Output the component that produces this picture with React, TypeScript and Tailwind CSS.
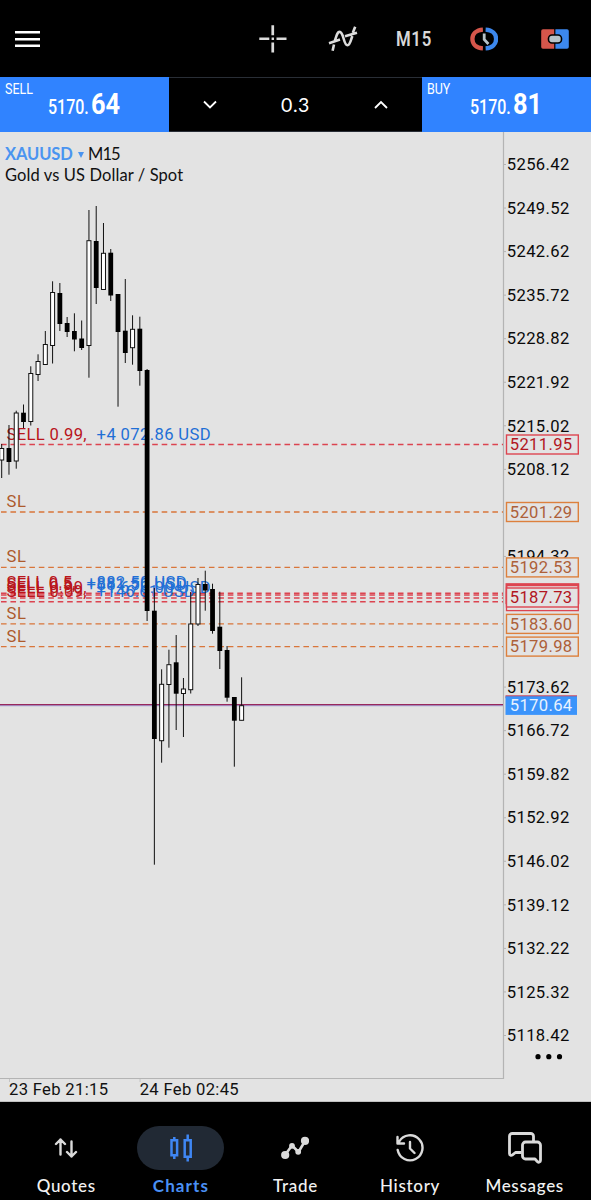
import type { ReactNode } from "react";

// [open/close top, open/close bottom, high, low, bullish]
type Candle = [number, number, number, number, boolean];

const CANDLES: Candle[] = [
  [448.5, 460, 444, 478, true],
  [448, 462, 425, 474.7, false],
  [413, 461, 410.7, 468.7, true],
  [412.7, 422, 404.5, 428, false],
  [373.5, 421.5, 366.3, 425.5, true],
  [361.5, 374.5, 354.3, 381, true],
  [344.5, 364.5, 331, 364.5, true],
  [292.5, 345.5, 281.3, 363.5, true],
  [293, 324, 283, 331, false],
  [323, 332, 317, 337, false],
  [331, 339.5, 313.3, 351.3, false],
  [338.5, 348, 320.5, 350, false],
  [240.7, 345.5, 210, 377.7, true],
  [241, 288, 206, 304, false],
  [253.3, 289.5, 223, 289.5, true],
  [252.7, 295.5, 249, 301, false],
  [294, 332, 294, 406.7, false],
  [330.7, 353, 279, 363, false],
  [329.3, 347.7, 315.3, 364.7, true],
  [328.7, 371, 316.7, 385.7, false],
  [370, 611, 369, 621, false],
  [610.7, 739, 588, 864.7, false],
  [684.3, 740.7, 669.3, 762.7, true],
  [664.7, 684.5, 649.7, 747.7, true],
  [662.3, 693.7, 635, 730, false],
  [689, 693.5, 678, 737, true],
  [624, 689.7, 592, 693.5, true],
  [584.5, 624, 578, 626, true],
  [584, 590.5, 570.7, 610.7, false],
  [589, 631, 583.7, 633.7, false],
  [626.7, 651, 591.7, 669, false],
  [650, 697.7, 646, 701.7, false],
  [697, 720.7, 697, 766.7, false],
  [705.7, 720.3, 677.3, 720.3, true],
];

const AXIS_LABELS = [
  "5256.42", "5249.52", "5242.62", "5235.72", "5228.82", "5221.92", "5215.02",
  "5208.12", "", "5194.32", "", "", "5173.62", "5166.72", "5159.82", "5152.92",
  "5146.02", "5139.12", "5132.22", "5125.32", "5118.42",
];

const STOPS = [
  { y: 512, price: "5201.29" },
  { y: 567.4, price: "5192.53" },
  { y: 623.9, price: "5183.60" },
  { y: 646.6, price: "5179.98" },
];

const POSITIONS = [
  { y: 444.5, volume: "0.99", volumeWidth: 80, profit: "+4 072.86 USD", x: 97, width: 114 },
  { y: 593.3, volume: "0.5", volumeWidth: 69, profit: "+882.50 USD", x: 87, width: 100 },
  { y: 595, volume: "0.5", volumeWidth: 69, profit: "+881.50 USD", x: 87, width: 100 },
  { y: 598, volume: "0.99", volumeWidth: 80, profit: "+1 670.00 USD", x: 97, width: 114 },
  { y: 601.7, volume: "0.09", volumeWidth: 80, profit: "+146.61 USD", x: 97, width: 98 },
];

function PriceTag({ y, price, stroke, fill }: { y: number; price: string; stroke: string; fill: string }) {
  return (
    <g>
      <rect x="506.5" y={y - 9.5} width="71.8" height="19" fill="#e3e3e3" stroke={stroke} strokeWidth="1.4" />
      <text x="509.7" y={y + 5.6} textLength="62.5" fill={fill}>{price}</text>
    </g>
  );
}

function Chart() {
  return (
    <svg viewBox="0 132 591 970" className="block h-[970px] w-[591px] font-['Roboto',sans-serif] text-[16.6px]">
      <path d="M503.5 132V1078.5H0" fill="none" stroke="#b4b4b4" strokeWidth="1.2" />
      <path d="M0 1101.5H591" stroke="#c0c0c0" />
      <path d="M9.5 1079v3M140 1079v3" stroke="#c4c4c4" />

      {AXIS_LABELS.map((label, i) => {
        const y = 164.5 + i * 43.55;
        return label && (
          <g key={label}>
            <path d={`M504 ${y}h2`} stroke="#b4b4b4" />
            <text x="506.8" y={y + 5.7} textLength="62.5" fill="#0a0a0a">{label}</text>
          </g>
        );
      })}

      {/* position levels */}
      {POSITIONS.map((p) => (
        <g key={p.profit}>
          <path d={`M1 ${p.y}H503`} stroke="#dc4450" strokeWidth="1.4" strokeDasharray="5.6 3.85" />
          <text x="6.6" y={p.y - 4.9} textLength={p.volumeWidth} fill="#b9151b">
            SELL {p.volume},
          </text>
          <text x={p.x - 0.4} y={p.y - 4.9} textLength={p.width} fill="#1f6fd6">{p.profit}</text>
        </g>
      ))}
      {STOPS.map((s) => (
        <g key={s.price}>
          <path d={`M1 ${s.y}H503`} stroke="#d9763a" strokeWidth="1.4" strokeDasharray="5.6 3.85" />
          <text x="6.6" y={s.y - 5} textLength="19.4" fill="#ad5a2c">SL</text>
        </g>
      ))}
      <path d="M0 705.7H503" stroke="#a9a4d8" strokeWidth="1.2" />
      <path d="M0 704.6H503" stroke="#98285c" strokeWidth="1.3" />

      {CANDLES.map(([top, bottom, high, low, bullish], i) => {
        const x = 1.7 + i * 7.27;
        return (
          <g key={i}>
            <path d={`M${x} ${high}V${low}`} stroke="#111" strokeWidth="1" />
            {bullish ? (
              <rect x={x - 2} y={top} width="4" height={bottom - top} fill="#fff" stroke="#111" strokeWidth="1" />
            ) : (
              <rect x={x - 2.4} y={top} width="4.8" height={bottom - top} fill="#000" />
            )}
          </g>
        );
      })}

      {/* price tags */}
      {STOPS.map((s) => (
        <PriceTag key={s.price} y={s.y} price={s.price} stroke="#dd803d" fill="#ad6039" />
      ))}
      <PriceTag y={444.5} price="5211.95" stroke="#dd4550" fill="#b2161f" />
      <rect x="506.5" y="592" width="71.8" height="18.6" fill="#e3e3e3" stroke="#dd4550" strokeWidth="1.3" />
      <rect x="506.5" y="584.2" width="71.8" height="19" fill="#e3e3e3" stroke="#dd4550" strokeWidth="2" />
      <PriceTag y={597.5} price="5187.73" stroke="#dd4550" fill="#b2161f" />
      <path d="M506 585H578.5" stroke="#dd4550" strokeWidth="2.4" />
      <rect x="505.5" y="695.3" width="71.5" height="3" fill="#c2405c" />
      <rect x="505.5" y="696.3" width="71.5" height="18.6" fill="#3b94fb" />
      <text x="509.7" y="711.4" textLength="62.5" fill="#e8f2ff">5170.64</text>

      <circle cx="538" cy="1056.7" r="2.6" />
      <circle cx="548.8" cy="1056.7" r="2.6" />
      <circle cx="559.5" cy="1056.7" r="2.6" />
      <text x="9" y="1095.2" textLength="99" fill="#111">23 Feb 21:15</text>
      <text x="139.7" y="1095.2" textLength="99" fill="#111">24 Feb 02:45</text>
    </svg>
  );
}

function Toolbar() {
  return (
    <header className="flex h-[77px] items-center">
      <svg viewBox="0 0 26 18" className="ml-[15px] h-[18px] w-[26px]">
        <path d="M0 2.3h25M0 9.2h25M0 15.8h25" stroke="#fff" strokeWidth="2.6" />
      </svg>
      <svg viewBox="0 0 28 28" className="ml-[218px] h-7 w-7" fill="#dcdcdc">
        <path d="M12.4.3h2.7v10h-2.7zM12.4 17.5h2.7v10h-2.7zM.3 12.5h10v2.6h-10zM17.5 12.5h10v2.6h-10zM12.6 12.6h2.4V15h-2.4z" />
      </svg>
      <svg viewBox="0 0 30 26" className="ml-[41px] h-[26px] w-[30px]" fill="none" stroke="#dcdcdc" strokeWidth="2.6">
        <path d="M1 17.2 12 13.6M17 10.2 29 6.8M4.6 24.8 6 18.5M6.7 15C8.8 9.3 9.2 5.9 11.5 5.9c4.5 0 3.8 13.4 8 13.4 2.5 0 3.3-5 4.8-9.3M24.8 6.8 27.2.8" />
      </svg>
      <span className="ml-[38px] inline-block w-[36px] origin-left scale-x-[.84] font-['Roboto',sans-serif] text-[20px] font-semibold tracking-[0.8px] text-[#d8d8d8]">
        M15
      </span>
      <svg viewBox="0 0 28 24" className="ml-[38px] h-6 w-7" fill="none">
        <path d="M12.9 2.6C6 3 2.4 7.2 2.4 12s3.6 9 10.5 9.4" stroke="#d6564b" strokeWidth="4.3" />
        <path d="M15.6 2.6C22.5 3 26.1 7.2 26.1 12s-3.6 9-10.5 9.4" stroke="#3c88ee" strokeWidth="4.3" />
        <path d="M14.2 6.5v6l4.2 4.5" stroke="#b7c3c9" strokeWidth="2.8" />
      </svg>
      <svg viewBox="0 0 28 20" className="ml-[43px] h-5 w-7">
        <path d="M2 .2h11.2v19.5H2a1.8 1.8 0 0 1-1.8-1.8V2A1.8 1.8 0 0 1 2 .2z" fill="#d6564b" />
        <path d="M14.4.2H26A1.8 1.8 0 0 1 27.8 2v15.9a1.8 1.8 0 0 1-1.8 1.8H14.4z" fill="#3c88ee" />
        <rect x="7.5" y="6" width="13" height="8" rx="3.5" fill="#b7c3c9" stroke="#000" strokeWidth="1.6" />
      </svg>
    </header>
  );
}

function Quote({ side, whole, cents }: { side: string; whole: string; cents: string }) {
  return (
    <button className="relative w-[169px] bg-[#3083ff] text-left font-['Roboto',sans-serif] text-white">
      <span className="absolute left-[5px] top-[5px] origin-left scale-x-[.86] text-[14.5px] leading-4">{side}</span>
      <span className="ml-12 mt-[2px] flex items-baseline">
        <span className="w-[42.5px]">
          <span className="inline-block origin-left scale-x-[.82] text-[19.5px] font-medium">{whole}.</span>
        </span>
        <span className="inline-block origin-left scale-x-[.86] text-[29.5px] font-bold leading-8">{cents}</span>
      </span>
    </button>
  );
}

function TradeBar() {
  return (
    <div className="flex h-[55px]">
      <Quote side="SELL" whole="5170" cents="64" />
      <div className="flex w-[253px] items-center border-y border-[#292e36] text-white">
        <svg viewBox="0 0 14 10" className="ml-[34px] h-[10px] w-[14px]" fill="none" stroke="#fff" strokeWidth="1.8">
          <path d="m1 1.5 6 6 6-6" />
        </svg>
        <span className="ml-[64px] w-[31px] font-['Lato',sans-serif] text-[19.5px] tracking-[0.6px]">0.3</span>
        <svg viewBox="0 0 14 10" className="ml-[62px] h-[10px] w-[14px]" fill="none" stroke="#fff" strokeWidth="1.8">
          <path d="m1 8 6-6 6 6" />
        </svg>
      </div>
      <Quote side="BUY" whole="5170" cents="81" />
    </div>
  );
}

function NavItem({ label, active, children }: { label: string; active?: boolean; children: ReactNode }) {
  return (
    <button className={`flex w-[114.6px] flex-col items-center ${active ? "text-[#4a90f5]" : "text-[#f2f2f2]"}`}>
      <span className={`flex h-11 w-[87px] items-center justify-center rounded-full ${active ? "bg-[#212934]" : ""}`}>
        {children}
      </span>
      <span className={`mt-1 font-['Lato',sans-serif] text-[17px] leading-6 ${active ? "font-bold tracking-[1.1px]" : "font-medium tracking-[0.7px]"}`}>
        {label}
      </span>
    </button>
  );
}

export default function App() {
  return (
    <div className="flex h-[1200px] w-[591px] flex-col overflow-hidden bg-black">
      <Toolbar />
      <TradeBar />
      <main className="relative h-[970px] bg-[#e3e3e3]">
        <Chart />
        <div className="absolute left-[5px] top-3 whitespace-nowrap font-['Lato',sans-serif] text-[16.5px] leading-[21px] text-[#111]">
          <div className="flex items-center">
            <span className="w-[73px] font-bold tracking-[-0.1px] text-[#4a94f0]">XAUUSD</span>
            <svg viewBox="0 0 6 6" className="h-[6px] w-[6px]">
              <path d="M0 0h6L3 6z" fill="#4a94f0" />
            </svg>
            <span className="ml-[4px] tracking-[-0.9px]">M15</span>
          </div>
          <div className="tracking-[0.1px]">Gold vs US Dollar / Spot</div>
        </div>
      </main>
      <nav className="flex h-[98px] pl-[9px] pt-6">
        <NavItem label="Quotes">
          <svg viewBox="0 0 24 20" className="h-5 w-6" fill="none" stroke="#dadada" strokeWidth="2.4" strokeLinecap="round" strokeLinejoin="round">
            <path d="M6.5 16.5V1.5M2 6l4.5-4.5L11 6M17.5 3.5v15M13 14l4.5 4.5L22 14" />
          </svg>
        </NavItem>
        <NavItem label="Charts" active>
          <svg viewBox="0 0 24 28" className="h-7 w-6" fill="none" stroke="#3f86f3" strokeWidth="2.5">
            <path d="M2.5 6.2h5.6v15H2.5zM15.7 6.2h6v16.5h-6zM5.3 3v3M5.3 21v4M18.7.5V6M18.7 23v4.5" />
          </svg>
        </NavItem>
        <NavItem label="Trade">
          <svg viewBox="0 0 28 24" className="h-6 w-7" fill="none" stroke="#dadada" strokeWidth="2.6" strokeLinejoin="round">
            <path d="m4 19 7-9.5 6.5 6.5L24 5" />
            <circle cx="4.2" cy="19" r="2.8" fill="#dadada" />
            <circle cx="11" cy="9.8" r="1.6" fill="#dadada" />
            <circle cx="17.2" cy="15.8" r="1.6" fill="#dadada" />
            <circle cx="24" cy="4.8" r="2.8" fill="#dadada" />
          </svg>
        </NavItem>
        <NavItem label="History">
          <svg viewBox="0 0 28 28" className="h-7 w-7" fill="none" stroke="#dadada" strokeWidth="2.4" strokeLinecap="round" strokeLinejoin="round">
            <path d="M1.7 16A12.5 12.5 0 1 0 3.2 7.5M1.5 3v6.5H8M14 8v6.5l4.5 4.5" />
          </svg>
        </NavItem>
        <NavItem label="Messages">
          <svg viewBox="0 0 34 32" className="h-8 w-[34px]" fill="none" stroke="#dadada" strokeWidth="2.8" strokeLinejoin="round">
            <path d="M25.5 9.5V4.3A2.8 2.8 0 0 0 22.7 1.5H4.3A2.8 2.8 0 0 0 1.5 4.3V21.5c0 1.8 1.7 2.3 3 1.3l3-2.3h6" />
            <path d="M17.5 10h11.8a3.2 3.2 0 0 1 3.2 3.2v15c0 2-1.8 2.5-3 1.5L27 27h-9.5a3 3 0 0 1-3-3V13a3 3 0 0 1 3-3z" />
          </svg>
        </NavItem>
      </nav>
    </div>
  );
}
